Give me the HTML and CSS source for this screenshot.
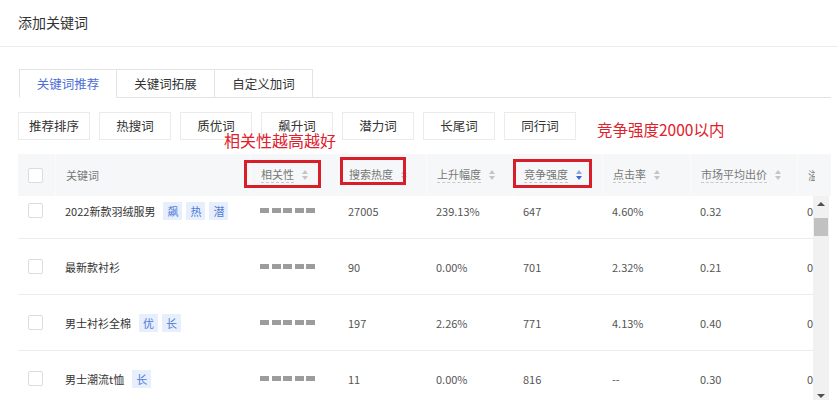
FILE: index.html
```html
<!DOCTYPE html>
<html lang="zh-CN">
<head>
<meta charset="utf-8">
<title>添加关键词</title>
<link rel="stylesheet" href="styles.css">
</head>
<body>
<div class="title">添加关键词</div>
<div class="content">
  <div class="tabs">
    <div class="tab active">关键词推荐</div>
    <div class="tab">关键词拓展</div>
    <div class="tab">自定义加词</div>
    <div class="tab-fill"></div>
  </div>
  <div class="filters">
    <div class="chip">推荐排序</div>
    <div class="chip">热搜词</div>
    <div class="chip">质优词</div>
    <div class="chip">飙升词</div>
    <div class="chip">潜力词</div>
    <div class="chip">长尾词</div>
    <div class="chip">同行词</div>
    <div class="note note-comp">竞争强度2000以内</div>
    <div class="note note-rel">相关性越高越好</div>
  </div>
  <div class="table">
    <div class="thead">
      <div class="hrow">
        <div class="cell c-check"><span class="checkbox"></span></div>
        <div class="cell c-kw">关键词</div>
        <div class="cell c-rel"><span class="lbl">相关性</span><span class="sort"></span><span class="mark mark-rel"></span></div>
        <div class="cell"><span class="lbl">搜索热度</span><span class="sort"></span><span class="mark mark-hot"></span></div>
        <div class="cell"><span class="lbl">上升幅度</span><span class="sort"></span></div>
        <div class="cell"><span class="lbl">竞争强度</span><span class="sort sort-active"></span><span class="mark mark-comp"></span></div>
        <div class="cell"><span class="lbl">点击率</span><span class="sort"></span></div>
        <div class="cell"><span class="lbl">市场平均出价</span><span class="sort"></span></div>
        <div class="cell">溢价</div>
      </div>
      <div class="gutter"></div>
    </div>
    <div class="tbody">
      <div class="rows">
        <div class="inner">
          <div class="brow">
            <div class="cell c-check"><span class="checkbox"></span></div>
            <div class="cell c-kw">2022新款羽绒服男<span class="tags"><span class="tag">飙</span><span class="tag">热</span><span class="tag">潜</span></span></div>
            <div class="cell"><span class="bars"><i></i><i></i><i></i><i></i><i></i></span></div>
            <div class="cell num">27005</div>
            <div class="cell num">239.13%</div>
            <div class="cell num">647</div>
            <div class="cell num">4.60%</div>
            <div class="cell num">0.32</div>
            <div class="cell num">0.32</div>
          </div>
          <div class="brow">
            <div class="cell c-check"><span class="checkbox"></span></div>
            <div class="cell c-kw">最新款衬衫</div>
            <div class="cell"><span class="bars"><i></i><i></i><i></i><i></i><i></i></span></div>
            <div class="cell num">90</div>
            <div class="cell num">0.00%</div>
            <div class="cell num">701</div>
            <div class="cell num">2.32%</div>
            <div class="cell num">0.21</div>
            <div class="cell num">0.21</div>
          </div>
          <div class="brow">
            <div class="cell c-check"><span class="checkbox"></span></div>
            <div class="cell c-kw">男士衬衫全棉<span class="tags"><span class="tag">优</span><span class="tag">长</span></span></div>
            <div class="cell"><span class="bars"><i></i><i></i><i></i><i></i><i></i></span></div>
            <div class="cell num">197</div>
            <div class="cell num">2.26%</div>
            <div class="cell num">771</div>
            <div class="cell num">4.13%</div>
            <div class="cell num">0.40</div>
            <div class="cell num">0.40</div>
          </div>
          <div class="brow">
            <div class="cell c-check"><span class="checkbox"></span></div>
            <div class="cell c-kw">男士潮流t恤<span class="tags"><span class="tag">长</span></span></div>
            <div class="cell"><span class="bars"><i></i><i></i><i></i><i></i><i></i></span></div>
            <div class="cell num">11</div>
            <div class="cell num">0.00%</div>
            <div class="cell num">816</div>
            <div class="cell num">--</div>
            <div class="cell num">0.30</div>
            <div class="cell num">0.30</div>
          </div>
        </div>
      </div>
      <div class="scrollbar">
        <div class="sb-arrow sb-up"></div>
        <div class="sb-thumb"></div>
        <div class="sb-track"></div>
        <div class="sb-arrow sb-down"></div>
      </div>
    </div>
  </div>
</div>
</body>
</html>
```

FILE: styles.css
```css
* { box-sizing: border-box; }
html, body { margin: 0; padding: 0; background: #fff; }
body {
  font-family: "Noto Sans CJK SC", "Noto Sans", sans-serif;
  color: #333;
  width: 838px;
  height: 400px;
  overflow: hidden;
}
.title {
  height: 47px;
  line-height: 44px;
  padding-left: 18px;
  font-size: 14px;
  color: #333;
  border-bottom: 1px solid #ececec;
}
.content {
  padding: 22px 0 0 18px;
  width: 831px;
}
.tabs {
  display: flex;
  height: 29px;
  padding-left: 1px;
}
.tab {
  width: 98px;
  height: 29px;
  line-height: 27px;
  text-align: center;
  font-size: 12.5px;
  color: #333;
  border: 1px solid #e3e3e3;
  border-left: none;
  background: #fff;
}
.tab.active {
  color: #4d6fd6;
  border-left: 1px solid #e3e3e3;
  border-bottom-color: #fff;
}
.tab-fill {
  flex: 1;
  border-bottom: 1px solid #e3e3e3;
}
.filters {
  position: relative;
  display: flex;
  align-items: center;
  gap: 9px;
  margin-top: 14px;
  height: 28px;
}
.chip {
  width: 72px;
  height: 28px;
  line-height: 26px;
  text-align: center;
  font-size: 12.5px;
  color: #333;
  border: 1px solid #ebebeb;
  background: #fff;
}
.note {
  color: #e0202a;
  font-size: 15.5px;
  white-space: nowrap;
}
.note-comp {
  margin-left: 12px;
  margin-top: 6px;
}
.note-rel {
  position: absolute;
  left: 206px;
  top: 16px;
  font-size: 16px;
  background: transparent;
}
.table {
  margin-top: 14px;
  font-size: 11px;
}
.thead {
  display: flex;
  height: 42px;
  background: #f6f7f9;
}
.hrow, .brow {
  display: grid;
  grid-template-columns: 37px 195px 88px 88px 87px 89px 88px 107px 80px;
  width: 797px;
  overflow: hidden;
}
.hrow { height: 42px; }
.hrow .cell {
  position: relative;
  display: flex;
  align-items: center;
  padding-left: 10px;
  color: #777;
  white-space: nowrap;
  border-left: 1px solid #fbfbfc;
}
.hrow .cell:first-child { border-left: none; }
.gutter { width: 16px; }
.c-check {
  justify-content: flex-start;
  padding-left: 10px !important;
}
.checkbox {
  display: inline-block;
  width: 15px;
  height: 15px;
  border: 1px solid #dcdcdc;
  border-radius: 2px;
  background: #fff;
}
.lbl {
  border-bottom: 1px dashed #c8c8c8;
  line-height: 15px;
}
.sort {
  display: inline-block;
  position: relative;
  width: 7px;
  height: 10px;
  margin-left: 8px;
}
.sort::before, .sort::after {
  content: "";
  position: absolute;
  left: 0;
  border-left: 3.5px solid transparent;
  border-right: 3.5px solid transparent;
}
.sort::before { top: 0; border-bottom: 4px solid #c4c4c4; }
.sort::after { bottom: 0; border-top: 4px solid #c4c4c4; }
.sort-active::before { border-bottom-color: #8fa6e6; }
.sort-active::after { border-top-color: #3d63d1; }
.mark {
  position: absolute;
  border: 3px solid #d81e28;
  pointer-events: none;
}
.mark-rel { left: -7px; top: 6px; width: 77px; height: 28px; }
.mark-hot { left: 1px; top: 3px; width: 66px; height: 28px; }
.mark-comp { left: -1px; top: 5px; width: 79px; height: 29px; }
.tbody {
  display: flex;
  height: 205px;
}
.rows {
  width: 797px;
  overflow: hidden;
}
.inner { margin-top: -13px; }
.brow {
  height: 56px;
  border-bottom: 1px solid #ececec;
}
.brow .cell {
  display: flex;
  align-items: center;
  padding-left: 10px;
  white-space: nowrap;
  color: #333;
}
.brow .num { color: #555; }
.tags { display: inline-flex; gap: 4px; margin-left: 8px; }
.tag {
  display: inline-block;
  width: 19px;
  height: 18px;
  line-height: 18px;
  text-align: center;
  background: #e8effc;
  color: #4f7ad8;
  font-size: 11px;
}
.bars { display: inline-flex; gap: 2.5px; }
.bars i {
  display: block;
  width: 9px;
  height: 5px;
  background: #9c9c9c;
}
.scrollbar {
  width: 16px;
  height: 205px;
  margin-left: -2px;
  background: #f1f1f1;
  display: flex;
  flex-direction: column;
  align-items: center;
}
.sb-arrow {
  width: 0;
  height: 0;
  border-left: 4px solid transparent;
  border-right: 4px solid transparent;
}
.sb-up { margin-top: 6px; border-bottom: 4px solid #505050; }
.sb-down { margin-bottom: 3px; border-top: 4px solid #505050; }
.sb-thumb {
  width: 14px;
  height: 18px;
  margin-top: 12px;
  background: #c1c1c1;
}
.sb-track { flex: 1; }
```
